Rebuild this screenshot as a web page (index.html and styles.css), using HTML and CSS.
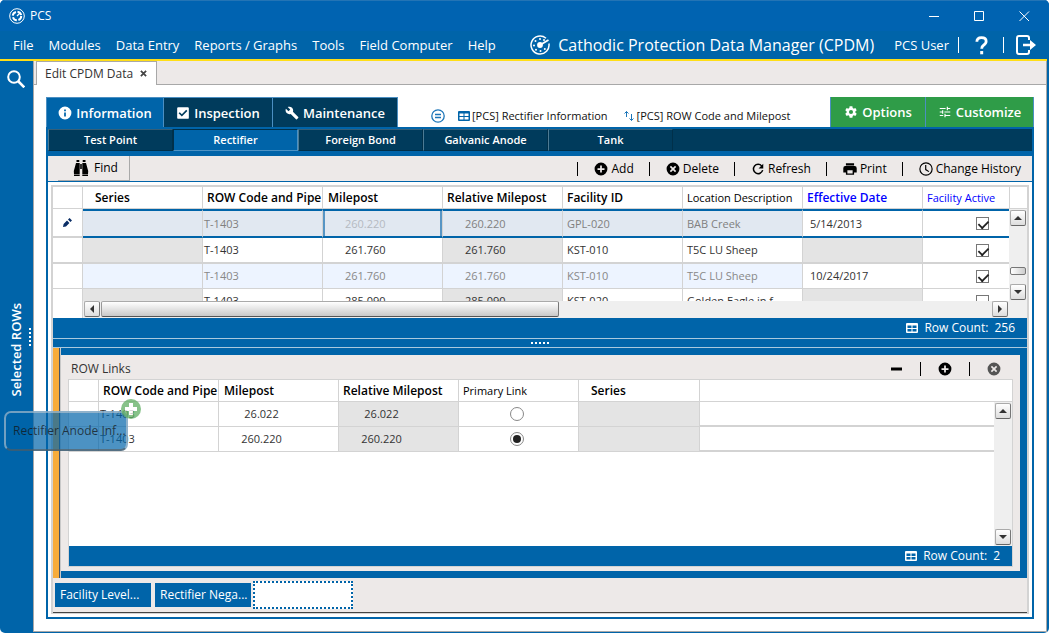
FILE: index.html
```html
<!DOCTYPE html>
<html lang="en">
<head>
<meta charset="utf-8">
<title>PCS</title>
<link rel="stylesheet" href="styles.css">
</head>
<body>
<svg class="defs" aria-hidden="true">
  <symbol id="i-plus" viewBox="0 0 24 24"><path d="M12 1a11 11 0 1 0 0 22 11 11 0 0 0 0-22zm6 12.500h-4.500V18h-3v-4.500H6v-3h4.500V6h3v4.500H18z"/></symbol>
  <symbol id="i-cancel" viewBox="0 0 24 24"><path d="M12 1a11 11 0 1 0 0 22 11 11 0 0 0 0-22zm5.500 14.500l-2 2L12 14l-3.500 3.500-2-2L10 12 6.500 8.500l2-2L12 10l3.500-3.500 2 2L14 12z"/></symbol>
  <symbol id="i-table" viewBox="0 0 24 20"><path fill-rule="evenodd" d="M2 0h20a2 2 0 0 1 2 2v16a2 2 0 0 1-2 2H2a2 2 0 0 1-2-2V2a2 2 0 0 1 2-2zm1 5v5h8V5zm10 0v5h8V5zM3 12v5h8v-5zm10 0v5h8v-5z"/></symbol>
  <symbol id="i-up" viewBox="0 0 8 8"><path d="M0 6l4-4 4 4z"/></symbol>
  <symbol id="i-down" viewBox="0 0 8 8"><path d="M0 2l4 4 4-4z"/></symbol>
  <symbol id="i-left" viewBox="0 0 8 8"><path d="M6 0L2 4l4 4z"/></symbol>
  <symbol id="i-right" viewBox="0 0 8 8"><path d="M2 0l4 4-4 4z"/></symbol>
</svg>
<div class="window">
  <header>
    <div class="titlebar">
      <svg class="logo" viewBox="0 0 16 16"><g fill="none" stroke="#fff"><circle cx="8" cy="8" r="7.300"/><circle cx="8" cy="8" r="4.200" stroke-width="2" stroke-dasharray="5 1.600"/><path d="M8 8l3-3" stroke-width="1.300"/></g></svg>
      <span class="app">PCS</span>
      <div class="winbtns">
        <button type="button" aria-label="Minimize"><svg viewBox="0 0 11 11"><path d="M0 5.500h10"/></svg></button>
        <button type="button" aria-label="Maximize"><svg viewBox="0 0 11 11"><path d="M.5.500h9v9h-9z"/></svg></button>
        <button type="button" aria-label="Close"><svg viewBox="0 0 11 11"><path d="M.5.500l9.500 9.500M10 .5L.5 10"/></svg></button>
      </div>
    </div>
    <div class="menubar">
      <nav>
        <a href="#">File</a><a href="#">Modules</a><a href="#">Data Entry</a><a href="#">Reports / Graphs</a><a href="#">Tools</a><a href="#">Field Computer</a><a href="#">Help</a>
      </nav>
      <div class="product">
        <svg viewBox="0 0 20 20"><path d="M16 3.300A9 9 0 1 0 18.900 8.500" fill="none" stroke="#fff" stroke-width="1.500"/><path d="M10 10l8.500-5" stroke="#fff" stroke-width="1.800"/><circle cx="10" cy="10" r="2.900" fill="#fff"/><g fill="#fff"><circle cx="10" cy="4" r="1"/><circle cx="5.500" cy="6" r="1"/><circle cx="4" cy="10.500" r="1"/><circle cx="6" cy="14.800" r="1"/><circle cx="10.500" cy="16" r="1"/><circle cx="14.800" cy="14" r="1"/><circle cx="14" cy="5" r="1"/></g></svg>
        <span>Cathodic Protection Data Manager (CPDM)</span>
      </div>
      <span class="user">PCS User</span>
      <i class="bar"></i>
      <button type="button" class="help" aria-label="Help"><svg viewBox="0 0 14 20"><path d="M2 6.500Q2 2 7 2t5 4q0 2.500-2.800 4.200Q7.200 11.400 7.200 14" fill="none" stroke="#fff" stroke-width="3"/><path d="M5.600 16.500h3.200V20H5.600z" fill="#fff"/></svg></button>
      <i class="bar"></i>
      <button type="button" class="exit" aria-label="Log out"><svg viewBox="0 0 20 20"><path d="M13 5V3a2 2 0 0 0-2-2H3a2 2 0 0 0-2 2v14a2 2 0 0 0 2 2h8a2 2 0 0 0 2-2v-2" fill="none" stroke="#fff" stroke-width="2"/><path d="M7 8.800h7V5l6 5-6 5v-3.800H7z" fill="#fff"/></svg></button>
    </div>
  </header>
  <div class="body">
    <aside>
      <button type="button" aria-label="Search"><svg viewBox="0 0 18 18" fill="none" stroke="#fff"><circle cx="7" cy="7" r="5.800" stroke-width="2"/><path d="M11 11l6.300 6.300" stroke-width="2.600"/></svg></button>
      <div class="rows"><span>Selected ROWs</span><i class="dots vert"></i></div>
    </aside>
    <main>
      <div class="doctabs"><div class="doctab">Edit CPDM Data <button type="button" aria-label="Close tab"><svg viewBox="0 0 8 8"><path d="M1 1l6 6M7 1L1 7"/></svg></button></div></div>
      <div class="page">
        <div class="tabs">
          <button type="button" class="tab on info"><svg viewBox="0 0 24 24"><path d="M12 1a11 11 0 1 0 0 22 11 11 0 0 0 0-22zm1.500 17h-3v-7h3zm0-9h-3V6h3z"/></svg>Information</button>
          <button type="button" class="tab insp"><svg viewBox="0 0 24 24"><path d="M20 2H4a2 2 0 0 0-2 2v16c0 1 .9 2 2 2h16a2 2 0 0 0 2-2V4a2 2 0 0 0-2-2zM10 18l-5.500-5.500 2-2L10 14l7.500-7.500 2 2z"/></svg>Inspection</button>
          <button type="button" class="tab maint"><svg viewBox="0 0 24 24"><path d="M22.700 19l-9.100-9.100c.9-2.300.4-5-1.500-6.900-2-2-5-2.400-7.400-1.300L9 6 6 9 1.600 4.700C.4 7.100.9 10.100 2.900 12.100c1.900 1.900 4.600 2.400 6.900 1.500l9.100 9.100c.4.400 1 .4 1.400 0l2.300-2.300c.5-.4.500-1.100.1-1.400z"/></svg>Maintenance</button>
          <div class="source">
            <svg class="eq" viewBox="0 0 14 14" fill="none" stroke="#1c75b8"><circle cx="7" cy="7" r="6.200" stroke-width="1.300"/><path d="M4 5.500h6M4 8.500h6" stroke-width="1.300"/></svg>
            <svg class="tbl"><use href="#i-table"/></svg><span>[PCS] Rectifier Information</span>
            <svg class="sort" viewBox="0 0 10 12" fill="none" stroke="#1c75b8"><path d="M2.500 7V1.500M.5 3.500l2-2 2 2M7.500 4v6.500M5.500 8.500l2 2 2-2"/></svg><span>[PCS] ROW Code and Milepost</span>
          </div>
          <button type="button" class="tab green opt"><svg viewBox="0 0 24 24"><path d="M19.400 13a7.800 7.800 0 0 0 0-2l2.400-1.800-2.300-4-2.800 1.100a7.500 7.500 0 0 0-1.800-1L14.400 2H9.600l-.5 3.300a7.500 7.500 0 0 0-1.800 1L4.500 5.200l-2.300 4L4.600 11a7.800 7.800 0 0 0 0 2l-2.400 1.800 2.300 4 2.800-1.100c.6.400 1.200.8 1.800 1l.5 3.300h4.800l.5-3.300c.6-.2 1.200-.6 1.800-1l2.800 1.100 2.300-4zM12 15.500a3.500 3.500 0 1 1 0-7 3.500 3.500 0 0 1 0 7z"/></svg>Options</button>
          <button type="button" class="tab green cust"><svg viewBox="0 0 24 24"><path d="M3 17v2h6v-2H3zM3 5v2h10V5H3zm10 16v-2h8v-2h-8v-2h-2v6h2zM7 9v2H3v2h4v2h2V9H7zm14 4v-2H11v2h10zm-6-4h2V7h4V5h-4V3h-2v6z"/></svg>Customize</button>
        </div>
        <section class="panel">
          <div class="subtabs"><button type="button">Test Point</button><button type="button" class="on">Rectifier</button><button type="button">Foreign Bond</button><button type="button">Galvanic Anode</button><button type="button">Tank</button></div>
          <div class="tools">
            <button type="button" class="find"><svg viewBox="0 0 16 16"><path d="M3.500 0h2.800v2H3.500zM9.700 0h2.800v2H9.700zM3 3h3.700v11.500H1L.8 11zM13 3H9.300v11.500H15l.2-3.500zM7.200 4h1.600v5H7.200zM1 15h5.700v1H1zM9.300 15H15v1H9.300z"/></svg>Find</button>
            <div class="actions">
              <button type="button"><svg><use href="#i-plus"/></svg>Add</button>
              <button type="button"><svg><use href="#i-cancel"/></svg>Delete</button>
              <button type="button"><svg viewBox="0 0 24 24"><path d="M18.500 7A8 8 0 1 0 20 14" fill="none" stroke="#000" stroke-width="2.500"/><path d="M21 3v8h-8z"/></svg>Refresh</button>
              <button type="button"><svg viewBox="0 0 24 24"><path d="M20 7H4a3.500 3.500 0 0 0-3.500 3.500V18H5v4h14v-4h4.500v-7.500A3.500 3.500 0 0 0 20 7zm-3.500 12.500h-9V14h9zM19 2H5v4h14z"/></svg>Print</button>
              <button type="button"><svg viewBox="0 0 24 24" fill="none" stroke="#000" stroke-width="2"><circle cx="12" cy="12" r="10.500"/><path d="M11.500 5v8l5.500 3.500"/></svg>Change History</button>
            </div>
          </div>
          <div class="work">
            <div class="grid">
              <div class="gridtop">
                <table>
                  <colgroup><col class="rh"><col class="c"><col class="c"><col class="c"><col class="c"><col class="c"><col class="c"><col class="c"><col></colgroup>
                  <thead><tr><th></th><th class="ind">Series</th><th>ROW Code and Pipe</th><th class="mp">Milepost</th><th>Relative Milepost</th><th>Facility ID</th><th class="reg">Location Description</th><th class="blue">Effective Date</th><th class="reg blue">Facility Active</th></tr></thead>
                  <tbody>
                    <tr class="sel"><td><svg class="pen" viewBox="0 0 9 9"><path d="M0 9l.6-3L4 2.600 6.400 5 3 8.400zM5 1.600L6.600 0 9 2.400 7.400 4z"/></svg></td><td></td><td class="code">T-1403</td><td class="num focus">260.220</td><td class="num">260.220</td><td>GPL-020</td><td>BAB Creek</td><td class="date">5/14/2013</td><td class="ck"><input type="checkbox" checked aria-label="Facility active, GPL-020"></td></tr>
                    <tr><td></td><td class="g"></td><td class="code">T-1403</td><td class="num">261.760</td><td class="num g">261.760</td><td>KST-010</td><td>T5C LU Sheep</td><td class="g"></td><td class="ck"><input type="checkbox" checked aria-label="Facility active, KST-010"></td></tr>
                    <tr class="alt"><td></td><td></td><td class="code">T-1403</td><td class="num">261.760</td><td class="num">261.760</td><td>KST-010</td><td>T5C LU Sheep</td><td class="date">10/24/2017</td><td class="ck"><input type="checkbox" checked aria-label="Facility active, KST-010 second"></td></tr>
                    <tr><td></td><td class="g"></td><td class="code">T-1403</td><td class="num">285.090</td><td class="num g">285.090</td><td>KST-020</td><td>Golden Eagle in f</td><td class="g"></td><td class="ck"><input type="checkbox" aria-label="Facility active, KST-020"></td></tr>
                  </tbody>
                </table>
                <div class="vcol"><div class="vscroll"><button type="button" aria-label="Scroll up"><svg><use href="#i-up"/></svg></button><i class="thumb"></i><button type="button" aria-label="Scroll down"><svg><use href="#i-down"/></svg></button></div></div>
              </div>
              <div class="hscroll"><button type="button" aria-label="Scroll left"><svg><use href="#i-left"/></svg></button><i class="hthumb"></i><button type="button" class="end" aria-label="Scroll right"><svg><use href="#i-right"/></svg></button></div>
              <div class="count"><svg><use href="#i-table"/></svg><span>Row Count:</span><span>256</span></div>
            </div>
            <div class="splitter"><i class="dots"></i></div>
            <div class="dock">
              <div class="links">
                <div class="linkhead"><h2>ROW Links</h2>
                  <div class="linkbtns"><button type="button" aria-label="Remove link"><svg viewBox="0 0 14 14"><path d="M2 5.500h11v3H2z"/></svg></button><button type="button" aria-label="Add link"><svg><use href="#i-plus"/></svg></button><button type="button" class="dim" aria-label="Close panel"><svg><use href="#i-cancel"/></svg></button></div>
                </div>
                <div class="linkbox">
                  <div class="linkgrid">
                    <table>
                      <colgroup><col class="rh"><col class="c"><col class="c"><col class="c"><col class="c"><col class="c1"><col></colgroup>
                      <thead><tr><th></th><th>ROW Code and Pipe</th><th class="mp">Milepost</th><th>Relative Milepost</th><th class="reg">Primary Link</th><th class="ind">Series</th><th></th></tr></thead>
                      <tbody>
                        <tr><td></td><td class="code">T-1403</td><td class="mid">26.022</td><td class="mid g">26.022</td><td class="rd"><input type="radio" name="primary" aria-label="Primary link 26.022"></td><td class="g"></td><td class="rest"></td></tr>
                        <tr><td></td><td class="code">T-1403</td><td class="mid">260.220</td><td class="mid g">260.220</td><td class="rd"><input type="radio" name="primary" checked aria-label="Primary link 260.220"></td><td class="g"></td><td class="rest"></td></tr>
                      </tbody>
                    </table>
                    <div class="vcol"><div class="vscroll"><button type="button" aria-label="Scroll up"><svg><use href="#i-up"/></svg></button><button type="button" class="last" aria-label="Scroll down"><svg><use href="#i-down"/></svg></button></div></div>
                  </div>
                  <div class="count"><svg><use href="#i-table"/></svg><span>Row Count:</span><span>2</span></div>
                </div>
              </div>
            </div>
            <div class="strip"><button type="button">Facility Level...</button><button type="button">Rectifier Nega...</button><div class="drop"></div></div>
          </div>
        </section>
      </div>
    </main>
  </div>
  <div class="ghost">Rectifier Anode Inf...<svg viewBox="0 0 20 20"><circle cx="10" cy="10" r="10" fill="#5fae62"/><path d="M8 4h4v4h4v4h-4v4H8v-4H4V8h4z" fill="#fff"/></svg></div>
</div>
</body>
</html>
```
FILE: styles.css
```css
:root {
  --blue: #0064a9;
  --navy: #003b5c;
  --gray: #ede9e8;
  --line: #d3d3d3;
}
* { box-sizing: border-box; }
body {
  margin: 0;
  font: 12px/16px "Open Sans", "Noto Sans", sans-serif;
  color: #333;
  background: #fff;
}
button {
  font: inherit;
  color: inherit;
  background: none;
  border: 0;
  padding: 0;
  display: flex;
  align-items: center;
  white-space: nowrap;
}
svg { display: block; flex: none; }
.defs { position: absolute; width: 0; height: 0; }
.window {
  position: relative;
  height: 100vh;
  display: flex;
  flex-direction: column;
  background: var(--blue);
  border-radius: 5px;
  overflow: hidden;
}

/* Title and menu */
.titlebar {
  display: flex;
  align-items: center;
  height: 31px;
  padding-left: 9px;
  background: #0063b1;
  border-top: 1px solid #2374b5;
  color: #fff;
}
.logo { width: 16px; height: 16px; }
.app { margin-left: 5px; }
.winbtns { margin-left: auto; display: flex; padding-right: 2px; }
.winbtns button { width: 45px; height: 30px; justify-content: center; }
.winbtns svg { width: 11px; height: 11px; fill: none; stroke: #fff; }
.menubar {
  display: flex;
  align-items: center;
  height: 30px;
  margin-right: 2px;
  padding: 0 11px 0 13px;
  border-bottom: 2px solid #ffde17;
  color: #fff;
  font-size: 13px;
  white-space: nowrap;
}
nav { display: flex; gap: 15px; }
nav a { color: #fff; text-decoration: none; }
.product { display: flex; align-items: center; gap: 8px; font-size: 16px; margin-left: auto; }
.product svg { width: 20px; height: 20px; }
.user { margin-left: 20px; }
.bar { width: 1px; height: 16px; background: #fff; }
.user + .bar { margin-left: 9px; }
.help { margin: 0 15px 0 16px; }
.help svg { width: 13px; height: 20px; }
.exit { margin-left: 12px; }
.exit svg { width: 20px; height: 20px; }

/* Side rail */
.body { flex: 1; display: flex; min-height: 0; padding: 0 2px 1px 0; }
aside { width: 33px; display: flex; flex-direction: column; color: #fff; }
aside button { padding: 9px 0 0 7px; }
aside button svg { width: 18px; height: 18px; }
.rows { flex: 1; display: flex; align-items: center; padding: 0 0 20px 7px; }
.rows span { writing-mode: vertical-rl; transform: rotate(180deg); font-weight: 600; font-size: 13px; line-height: 18px; }
.dots { display: block; width: 18px; height: 2px; background: repeating-linear-gradient(90deg, #fff 0 2px, transparent 2px 4px); }
.dots.vert { width: 2px; height: 18px; margin: 0 0 26px 4px; background: repeating-linear-gradient(#fff 0 2px, transparent 2px 4px); }

/* Document area */
main {
  flex: 1;
  min-width: 0;
  display: flex;
  flex-direction: column;
  background: #fff;
  border: 1px solid #a8a8a8;
  border-top: 0;
}
.doctabs { height: 24px; display: flex; padding-left: 2px; background: var(--gray); box-shadow: inset 0 -1px #a8a8a8; }
.doctab { display: flex; align-items: center; gap: 7px; padding: 0 9px 0 8px; border: 1px solid #a8a8a8; border-bottom: 0; background: #fff; }
.doctab svg { width: 7px; height: 7px; fill: none; stroke: #444; stroke-width: 2; }
.page { flex: 1; min-height: 0; display: flex; flex-direction: column; padding: 12px; }
.tabs { display: flex; height: 30px; }
.tab { justify-content: center; gap: 4px; background: var(--navy); color: #fff; font-weight: 600; font-size: 13px; border: solid #4b8fc2; border-width: 1px 1px 0 0; }
.tab svg { width: 14px; height: 14px; fill: #fff; }
.tab.on { background: var(--blue); border-left-width: 1px; }
.info { width: 118px; }
.insp { width: 109px; }
.maint { width: 125px; }
.green { background: #2f9c48; border-width: 0 0 0 1px; }
.opt { width: 95px; }
.cust { width: 109px; border-right-width: 1px; }
.source { flex: 1; display: flex; align-items: center; padding: 8px 0 0 33px; color: #111; font-size: 11px; white-space: nowrap; }
.eq { width: 14px; height: 14px; margin-right: 13px; }
.tbl { width: 12px; height: 10px; fill: var(--blue); margin-right: 2px; }
.sort { width: 10px; height: 12px; margin: 0 3px 0 16px; }

.panel { flex: 1; min-height: 0; display: flex; flex-direction: column; border: 2px solid var(--blue); }
.subtabs { display: flex; height: 27px; background: var(--navy); border-bottom: 5px solid var(--blue); color: #fff; font-size: 11px; font-weight: 600; }
.subtabs button { width: 125px; justify-content: center; border: 1px solid #00304a; border-top-color: #355f78; border-left-color: #4d7b94; }
.subtabs .on { background: var(--blue); border-color: #00304a #4d93c5 #4d93c5 #00304a; }
.tools { display: flex; height: 26px; padding-left: 10px; background: var(--gray); border-bottom: 1px solid var(--blue); color: #000; }
.find { width: 72px; gap: 5px; padding-left: 15px; border: solid #a9a9a9; border-width: 0 1px 1px 0; }
.find svg { width: 16px; height: 16px; }
.actions { margin-left: auto; display: flex; align-items: center; padding-right: 11px; }
.actions button { gap: 3px; height: 14px; padding: 0 15px 0 16px; border-left: 1px solid #000; }
.actions button:last-child { padding-right: 0; }
.actions svg { width: 14px; height: 14px; }
.work { flex: 1; min-height: 0; display: flex; flex-direction: column; margin: 3px; border: solid var(--line); border-width: 2px 2px 1px; }

/* Record grid */
table { width: 100%; table-layout: fixed; border-collapse: separate; border-spacing: 0; }
.rh { width: 30px; }
.c { width: 120px; }
.c1 { width: 121px; }
th, td { height: 25px; padding: 0 0 0 4px; border: solid var(--line); border-width: 0 1px 1px 0; text-align: left; white-space: nowrap; overflow: hidden; }
td { font-size: 11px; }
th { height: 22px; color: #000; font-weight: 600; }
.ind { padding-left: 12px; }
.mp { padding-left: 5px; }
.reg { font-weight: 400; font-size: 11px; }
.blue { color: #00f; }
.code { padding-left: 1px; }
.num { padding-left: 22px; }
.date { padding-left: 7px; }
.g { background: #e4e4e4; }
.mid { text-align: center; padding: 0 34px 0 0; }
.ck { padding-left: 53px; }
.gridtop { display: flex; height: 114px; overflow: hidden; }
.gridtop td { height: 26px; border-bottom-width: 2px; }
.gridtop td:last-child, .gridtop th:last-child { border-right: 0; }
.gridtop .sel td { height: 29px; }
.gridtop .alt td { height: 25px; border-bottom-width: 1px; }
.sel td:not(:first-child) { border-top: 2px solid var(--blue); border-bottom: 2px solid var(--blue); background: #e1e8f1; color: #808080; }
.sel td.focus { color: #b5bac1; box-shadow: inset 2px 0 #5795c4, inset -2px 0 #5795c4; }
.alt td:not(:first-child) { background: #edf4ff; color: #888; }
tr.sel td.date, tr.sel td.ck, tr.alt td.date, tr.alt td.ck { background: #fff; color: #333; }
.pen { width: 9px; height: 9px; margin-left: 6px; fill: #0b2e66; }
input { appearance: none; display: block; margin: 0; background: #fff; }
input[type="checkbox"] { width: 13px; height: 13px; border: 1px solid #777; }
input[type="checkbox"]:checked::before { content: ""; display: block; width: 9px; height: 5px; margin: 2px 0 0 1px; border: solid #222; border-width: 0 0 2px 2px; transform: rotate(-45deg) scale(.9); }
input[type="radio"] { width: 14px; height: 14px; border: 1px solid #888; border-radius: 50%; padding: 2px; margin: auto; }
input[type="radio"]:checked::before { content: ""; display: block; width: 8px; height: 8px; border-radius: 50%; background: #222; }
.vcol { flex: none; width: 18px; padding-top: 22px; display: flex; box-shadow: inset 1px 0 var(--line); }
.vscroll { flex: 1; display: flex; flex-direction: column; padding: 1px; background: #efefef; border-top: 1px solid var(--line); margin-top: -1px; }
.vscroll button, .hscroll button { flex: none; width: 16px; height: 16px; justify-content: center; border: 1px solid #777; border-color: #aaa #777 #666 #aaa; border-radius: 2px; background: linear-gradient(#fff, #ddd); }
.vscroll svg, .hscroll svg { width: 8px; height: 8px; fill: #333; }
.thumb { width: 16px; height: 8px; margin: auto 0 9px; border: 1px solid #777; border-radius: 2px; background: linear-gradient(90deg, #fff, #ccc); }
.last { margin-top: auto; }
.hscroll { display: flex; height: 17px; padding: 0 19px 0 1px; margin-left: 30px; background: #efefef; box-shadow: -1px 0 var(--line); }
.hthumb { width: 458px; height: 16px; margin-left: 1px; border: 1px solid #777; border-color: #aaa #777 #555 #999; border-radius: 2px; background: linear-gradient(#fff, #c9c9c9); }
.end { margin-left: auto; }
.count { display: flex; align-items: center; justify-content: flex-end; gap: 6px; height: 20px; padding-right: 12px; background: var(--blue); color: #fff; }
.count svg { width: 12px; height: 10px; fill: #fff; }

/* Docked links panel */
.splitter { height: 10px; background: var(--blue); border: solid #a9c9de; border-width: 1px 0; display: flex; align-items: center; justify-content: center; }
.dock { flex: 1; min-height: 0; display: flex; padding: 7px 7px 7px 0; background: linear-gradient(90deg, #f7ac3b 6px, #44546a 6px 7px, #c9c9c9 7px 8px, var(--blue) 8px); }
.links { flex: 1; min-width: 0; display: flex; flex-direction: column; margin-left: 8px; padding: 0 7px 4px; background: var(--gray); }
.linkhead { display: flex; height: 24px; align-items: center; padding: 3px 12px 0 3px; }
h2 { margin: 0; font-size: 12px; font-weight: 400; }
.linkbtns { margin-left: auto; display: flex; }
.linkbtns button { height: 14px; padding-left: 17px; margin-left: 17px; border-left: 1px solid #000; }
.linkbtns button:first-child { border: 0; }
.linkbtns svg { width: 14px; height: 14px; }
.dim { fill: #555; }
.linkbox { flex: 1; min-height: 0; display: flex; flex-direction: column; background: #fff; border: 1px solid var(--line); }
.linkgrid { flex: 1; min-height: 0; display: flex; }
.linkgrid table { align-self: flex-start; }
.linkgrid .rest, .linkgrid th:last-child { border-right: 0; }
.linkgrid .rest { border-bottom-width: 2px; }
.linkgrid .vcol { box-shadow: none; }
.rd { padding: 0 3px 0 0; }

.strip { display: flex; align-items: center; gap: 4px; height: 35px; padding: 0 2px; background: var(--gray); border-bottom: 1px solid #444; }
.strip button { width: 96px; height: 24px; padding-left: 5px; background: var(--blue); color: #fff; }
.drop { width: 100px; height: 28px; background: #fff; border: 2px dotted var(--blue); margin-left: -2px; }

/* Tab being dragged */
.ghost { position: absolute; left: 4px; top: 411px; width: 124px; height: 40px; padding: 10px 7px; border: 2px solid rgba(190, 200, 210, .6); border-bottom-color: rgba(90, 90, 90, .6); border-radius: 7px; background: rgba(0, 100, 169, .7); color: rgba(20, 20, 20, .75); white-space: nowrap; }
.ghost svg { position: absolute; right: -15px; top: -14px; width: 20px; height: 20px; opacity: .75; }
```
